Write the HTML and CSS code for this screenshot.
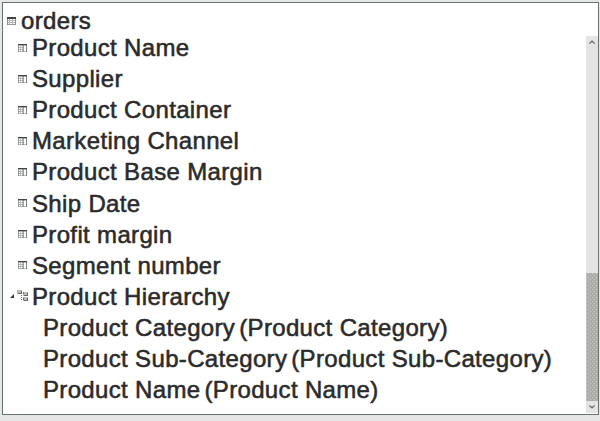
FILE: index.html
```
<!DOCTYPE html>
<html lang="en">
<head>
<meta charset="utf-8">
<title>Fields</title>
<link rel="stylesheet" href="styles.css">
</head>
<body>
<svg class="defs" aria-hidden="true">
  <symbol id="table" viewBox="0 0 9 8">
    <path d="M0 .5h9v7.5h-9z" fill="#b4b9b6"/>
    <path d="M0 0h9v2H0z" fill="#454545"/>
    <path d="M1 2h1v1H1zM3 2h2v1H3zM6 2h2v1H6zM1 4h1v1H1zM3 4h2v1H3zM6 4h2v1H6zM1 6h1v1H1zM3 6h2v1H3zM6 6h2v1H6z" fill="#fff"/>
    <path d="M0 2h.6v6H0zM8.4 2H9v6h-.6zM0 7.4h9V8H0z" fill="#777e7a"/>
  </symbol>
  <symbol id="field" viewBox="0 0 9 8">
    <path d="M0 0h9v8H0z" fill="#fff"/>
    <path d="M0 0h9v1.4H0z" fill="#454545"/>
    <path d="M0 3h5v.8H0zM0 5h5v.8H0zM0 7.2h9V8H0zM2 1h.8v7H2z" fill="#a8adaa"/>
    <path d="M0 1h.6v7H0zM4.6 1h1v7h-1zM8.2 1H9v7h-.8z" fill="#626865"/>
  </symbol>
</svg>
<main class="panel">
  <div class="row root"><svg class="icon"><use href="#table"/></svg><span>orders</span></div>
  <div class="body">
    <div class="tree">
      <div class="row"><svg class="icon"><use href="#field"/></svg><span>Product Name</span></div>
      <div class="row"><svg class="icon"><use href="#field"/></svg><span>Supplier</span></div>
      <div class="row"><svg class="icon"><use href="#field"/></svg><span>Product Container</span></div>
      <div class="row"><svg class="icon"><use href="#field"/></svg><span>Marketing Channel</span></div>
      <div class="row"><svg class="icon"><use href="#field"/></svg><span>Product Base Margin</span></div>
      <div class="row"><svg class="icon"><use href="#field"/></svg><span>Ship Date</span></div>
      <div class="row"><svg class="icon"><use href="#field"/></svg><span>Profit margin</span></div>
      <div class="row"><svg class="icon"><use href="#field"/></svg><span>Segment number</span></div>
      <div class="row group">
        <svg class="caret" viewBox="0 0 4 4"><path d="M4 0v4H0z" fill="#333"/></svg>
        <svg class="hier" viewBox="0 0 12 12">
          <path d="M0 0h5v4H0zM6 2h5v4H6zM6 7h5v4H6z" fill="#b9bbb4"/>
          <path d="M1 3h4v1H1zM4 1h1v2H4zM7 5h4v1H7zM6 2h1v2H6zM10 3h1v2h-1zM6 8h1v2H6zM7 10h4v1H7zM10 8h1v2h-1z" fill="#6a6e69"/>
          <path d="M4 5h1v1H4zM4 7h1v1H4zM4 9h1v1H4z" fill="#6e726e"/>
        </svg>
        <span>Product Hierarchy</span>
      </div>
      <div class="row level"><span>Product Category<i></i>(Product Category)</span></div>
      <div class="row level"><span>Product Sub-Category<i></i>(Product Sub-Category)</span></div>
      <div class="row level"><span>Product Name<i></i>(Product Name)</span></div>
    </div>
    <div class="scrollbar">
      <div class="arrow"><svg viewBox="0 0 6 4"><path d="M.5 3.5 3 1l2.5 2.5" fill="none" stroke="#626662" stroke-width="1.2"/></svg></div>
      <div class="track"></div>
      <div class="thumb"></div>
      <div class="arrow down"><svg viewBox="0 0 6 4"><path d="M.5.5 3 3 5.5.5" fill="none" stroke="#626662" stroke-width="1.2"/></svg></div>
    </div>
  </div>
</main>
</body>
</html>
```
FILE: styles.css
```
* { box-sizing: border-box; }
body {
  margin: 0;
  height: 421px;
  padding: 2px 1px 6px 2px;
  background: #e6e6e6;
  overflow: hidden;
  font: 24px/31px "Liberation Sans", Arial, sans-serif;
  letter-spacing: .34px;
  color: #2b2b2b;
  -webkit-text-stroke: .55px #2b2b2b;
}
.defs { position: absolute; width: 0; height: 0; }
.panel {
  height: 413px;
  display: flex;
  flex-direction: column;
  background: #fff;
  border: 1px solid #66756b;
}
.row {
  display: flex;
  align-items: center;
  height: 31.1px;
  padding-left: 15px;
  white-space: nowrap;
}
.root { height: 33px; padding: 2px 0 0 4px; }
.icon { width: 9px; height: 8px; margin-right: 5px; flex: none; }
.body { display: flex; flex: 1; min-height: 0; }
.tree { flex: 1; margin-top: -4px; }
.group { padding-left: 7px; }
.caret { width: 4px; height: 4px; margin-right: 3px; }
.hier { width: 12px; height: 12px; margin-right: 3px; }
.level { padding-left: 40px; }
.level i { display: inline-block; width: 4px; }
.scrollbar {
  width: 12px;
  margin-bottom: 1px;
  display: flex;
  flex-direction: column;
  background: #e4e4e4;
}
.arrow { height: 12px; display: grid; place-items: center; }
.arrow svg { width: 6px; height: 4px; }
.track { height: 225px; }
.thumb {
  flex: 1;
  border-left: 1px solid #c2c2c2;
  background-color: #adadaa;
  background-image:
    linear-gradient(#cbcbc8, #cbcbc8),
    linear-gradient(#cbcbc8, #cbcbc8);
  background-size: 11px 4px;
  background-size: 4px 4px;
  background-image:
    conic-gradient(from 0deg at 1px 1px, transparent 75%, #cbcbc8 0),
    conic-gradient(from 0deg at 1px 1px, transparent 75%, #cbcbc8 0);
  background-position: 1px 0, 3px 2px;
}
```
